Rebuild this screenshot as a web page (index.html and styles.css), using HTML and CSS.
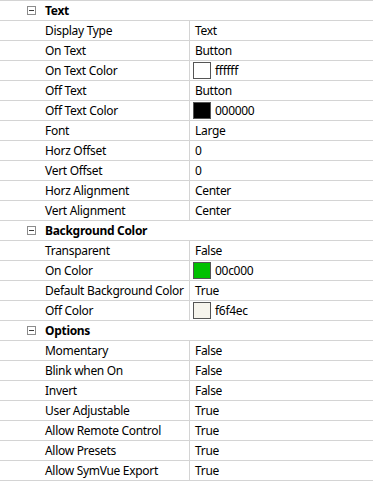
FILE: index.html
```html
<!DOCTYPE html>
<html>
<head>
<meta charset="utf-8">
<link rel="stylesheet" href="styles.css">
</head>
<body>
<div class="grid">
  <div class="cat"><span class="exp"></span><span class="cat-name">Text</span></div>
  <div class="row"><div class="name">Display Type</div><div class="val">Text</div></div>
  <div class="row"><div class="name">On Text</div><div class="val">Button</div></div>
  <div class="row"><div class="name">On Text Color</div><div class="val"><span class="sw sw-white"></span>ffffff</div></div>
  <div class="row"><div class="name">Off Text</div><div class="val">Button</div></div>
  <div class="row"><div class="name">Off Text Color</div><div class="val"><span class="sw sw-black"></span>000000</div></div>
  <div class="row"><div class="name">Font</div><div class="val">Large</div></div>
  <div class="row"><div class="name">Horz Offset</div><div class="val">0</div></div>
  <div class="row"><div class="name">Vert Offset</div><div class="val">0</div></div>
  <div class="row"><div class="name">Horz Alignment</div><div class="val">Center</div></div>
  <div class="row"><div class="name">Vert Alignment</div><div class="val">Center</div></div>
  <div class="cat"><span class="exp"></span><span class="cat-name">Background Color</span></div>
  <div class="row"><div class="name">Transparent</div><div class="val">False</div></div>
  <div class="row"><div class="name">On Color</div><div class="val"><span class="sw sw-green"></span>00c000</div></div>
  <div class="row"><div class="name">Default Background Color</div><div class="val">True</div></div>
  <div class="row"><div class="name">Off Color</div><div class="val"><span class="sw sw-off"></span>f6f4ec</div></div>
  <div class="cat"><span class="exp"></span><span class="cat-name">Options</span></div>
  <div class="row"><div class="name">Momentary</div><div class="val">False</div></div>
  <div class="row"><div class="name">Blink when On</div><div class="val">False</div></div>
  <div class="row"><div class="name">Invert</div><div class="val">False</div></div>
  <div class="row"><div class="name">User Adjustable</div><div class="val">True</div></div>
  <div class="row"><div class="name">Allow Remote Control</div><div class="val">True</div></div>
  <div class="row"><div class="name">Allow Presets</div><div class="val">True</div></div>
  <div class="row"><div class="name">Allow SymVue Export</div><div class="val">True</div></div>
</div>
</body>
</html>
```
FILE: styles.css
```css
html, body {
  margin: 0;
  padding: 0;
  background: #ffffff;
}
body {
  font-family: "Segoe UI", "Noto Sans", "Open Sans", sans-serif;
  font-size: 12px;
  letter-spacing: -0.3px;
  color: #000000;
}
.grid {
  border-top: 1px solid #d4d4d4;
}
.row, .cat {
  height: 19px;
  border-bottom: 1px solid #d4d4d4;
  display: flex;
  align-items: center;
}
.row {
  display: grid;
  grid-template-columns: 190px 1fr;
  align-items: stretch;
}
.name {
  padding-left: 45px;
  border-right: 1px solid #d4d4d4;
  display: flex;
  align-items: center;
  white-space: nowrap;
  overflow: hidden;
}
.val {
  padding-left: 5px;
  display: flex;
  align-items: center;
  white-space: nowrap;
}
.cat {
  font-weight: bold;
}
.exp {
  box-sizing: border-box;
  width: 9px;
  height: 9px;
  margin-left: 27px;
  margin-right: 9px;
  border: 1px solid #8c8c8c;
  position: relative;
}
.exp::after {
  content: "";
  position: absolute;
  left: 1px;
  right: 1px;
  top: 3px;
  height: 1px;
  background: #3c3c3c;
}
.sw {
  box-sizing: border-box;
  width: 18px;
  height: 17px;
  border: 1px solid #555555;
  margin-right: 4px;
  margin-left: -2px;
}
.sw-white { background: #ffffff; }
.sw-black { background: #000000; }
.sw-green { background: #00c000; }
.sw-off { background: #f6f4ec; }
```
